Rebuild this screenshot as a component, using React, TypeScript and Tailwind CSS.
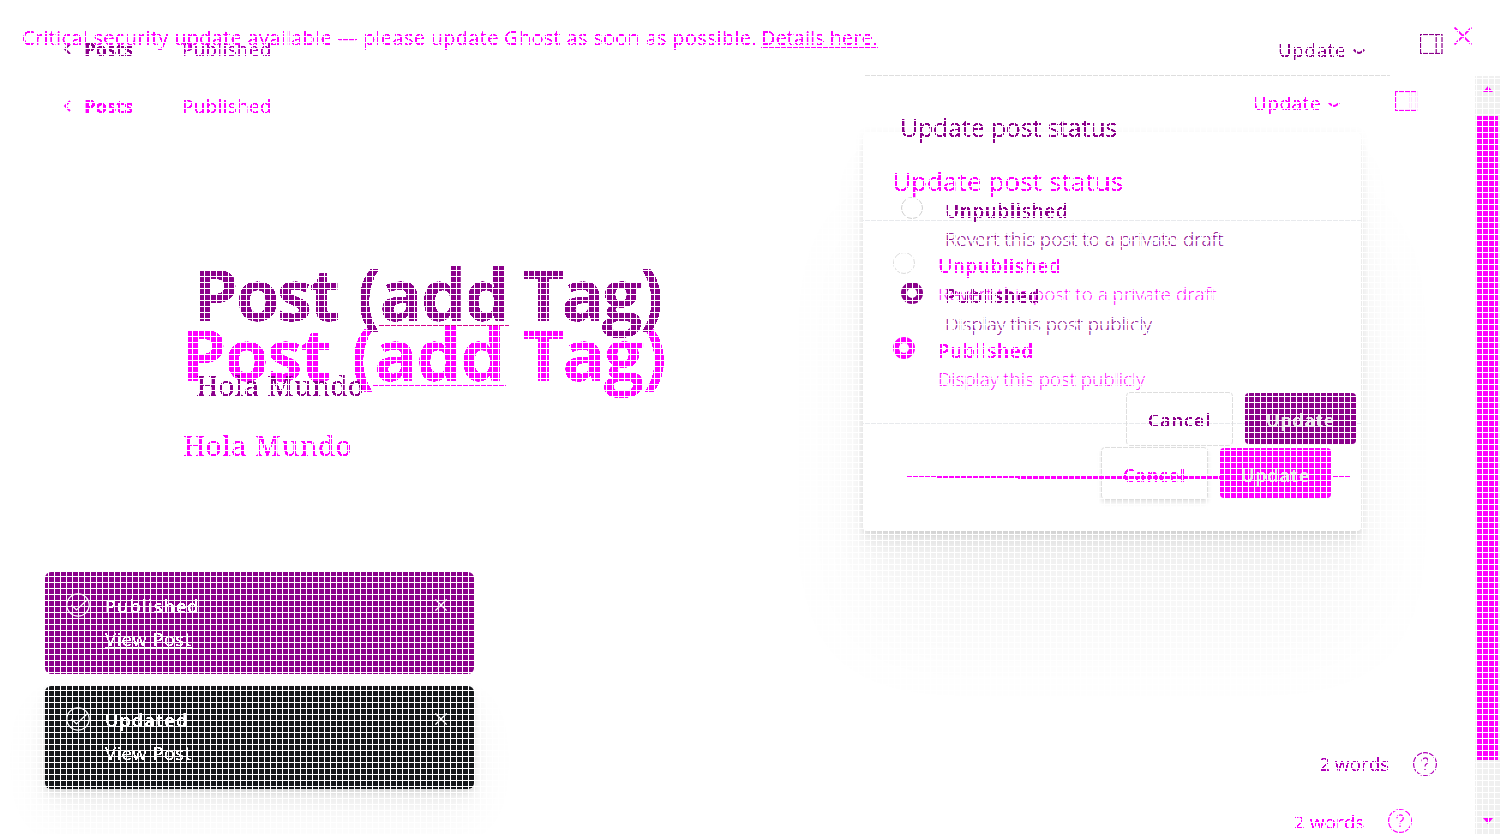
import React from "react";

type Box = { className?: string; children?: React.ReactNode };

/* Full-size sheet; sheets share one grid cell, so later ones lie over earlier ones. */
function Sheet({ className = "", children }: Box) {
  return (
    <div className={`col-start-1 row-start-1 flex h-[834px] w-[1500px] overflow-hidden ${className}`}>
      {children}
    </div>
  );
}

/* Text with hard glyph edges */
function T({ className = "", children }: Box) {
  return (
    <span className={`block h-5 shrink-0 whitespace-nowrap leading-5 [filter:url(#crisp)] ${className}`}>{children}</span>
  );
}

function Cross({ className = "" }: Box) {
  return (
    <svg className={className} viewBox="0 0 18 18" fill="none" stroke="currentColor" strokeWidth="1.9">
      <path d="M0.5 0.5 17.5 17.5M17.5 0.5 0.5 17.5" />
    </svg>
  );
}

function ChevronLeft() {
  return (
    <svg className="h-3 w-2 shrink-0" viewBox="0 0 8 12" fill="none" stroke="currentColor" strokeWidth="1.8">
      <path d="M7 1 2 6 7 11" />
    </svg>
  );
}

function ChevronDown() {
  return (
    <svg className="h-2 w-3 shrink-0" viewBox="0 0 12 8" fill="none" stroke="currentColor" strokeWidth="2">
      <path d="M0.8 1.5Q4 5 6 5T11.2 1.5" />
    </svg>
  );
}

function PanelIcon({ frame, divider }: { frame: number; divider: number }) {
  return (
    <svg className="h-5 w-[23px] shrink-0" viewBox="0 0 23 20" fill="none" stroke="currentColor" strokeWidth="1.2">
      <rect x="0.5" y="0.5" width={frame} height="19" />
      <path d={`M${divider} 0.5V19.5`} />
    </svg>
  );
}

function Help() {
  return (
    <svg className="h-6 w-6 shrink-0" viewBox="0 0 24 24" fill="none" stroke="currentColor" strokeWidth="1.2">
      <circle cx="12" cy="12" r="11.4" />
      <path d="M9 9.2A3.1 3.1 0 1 1 13.6 11.8C12.5 12.4 12 13 12 14.5" />
      <path d="M12 16.5V18" strokeWidth="1.4" />
    </svg>
  );
}

function Check() {
  return (
    <svg className="h-6 w-6 shrink-0" viewBox="0 0 24 24" fill="none" stroke="currentColor" strokeWidth="1.2">
      <circle cx="12" cy="12" r="11.2" />
      <path d="M5.5 12 10.5 17 21.5 6.5" />
    </svg>
  );
}

function Toast({ title, titleClass, underlined, className }: { title: string; titleClass: string; underlined?: boolean; className: string }) {
  return (
    <div className={`flex w-[429px] rounded-md pl-[21px] pr-[27px] text-[18px] text-white ${className}`}>
      <div className="pt-[21px]">
        <Check />
      </div>
      <div className="ml-[15px] pt-[24px]">
        <T className={`font-semibold ${titleClass}`}>{title}</T>
        <T className="mt-[13px] text-[18.5px] tracking-[0.4px]">
          <span className={underlined ? "underline underline-offset-1" : ""}>View Post</span>
        </T>
      </div>
      <Cross className="ml-auto mt-[27px] h-3 w-3" />
    </div>
  );
}

function Radio({ on, className = "" }: { on?: boolean; className?: string }) {
  return (
    <span
      className={`box-border block h-[22px] w-[22px] shrink-0 rounded-full ${on ? "border-[6px]" : "border"} ${className}`}
    />
  );
}

function Option({ label, labelClass, note, noteClass, on, ring, gap }: { label: string; labelClass: string; note: string; noteClass: string; on?: boolean; ring: string; gap: string }) {
  return (
    <div className={`flex h-[57px] text-[19px] ${gap}`}>
      <Radio on={on} className={ring} />
      <div className="pt-1">
        <T className={`font-semibold ${labelClass}`}>{label}</T>
        <span className={`mt-2 block h-5 whitespace-nowrap font-light leading-5 ${noteClass}`}>{note}</span>
      </div>
    </div>
  );
}

function PostTitle({ words, rule }: { words: [string, string, string]; rule: string }) {
  return (
    <div className="flex h-[70px] whitespace-nowrap text-[71px] font-bold leading-[70px] [filter:url(#crisp)]">
      <span className={`shrink-0 ${words[0]}`}>Post</span>
      <span className={`flex shrink-0 ${words[1]}`}>
        (<span className="relative">
          add
          <span className={`absolute -left-px right-[-1px] top-[66px] h-px ${rule}`} />
        </span>
      </span>
      <span className={`shrink-0 ${words[2]}`}>Tag)</span>
    </div>
  );
}

function PublishedState() {
  return (
    <>
      <Sheet className="items-start pt-24 text-[18px]">
        <div className="flex w-[1475px] items-center pl-[63px]">
          <ChevronLeft />
          <T className="ml-[13px] w-[98px] text-[18.5px] font-bold">Posts</T>
          <T className="text-[19px] tracking-[0.3px]">Published</T>
          <div className="ml-auto flex items-start pr-[57px]">
            <T className="w-[75px] -translate-y-[3px] text-[19px] tracking-[0.5px]">Update</T>
            <span className="mt-[5px]"><ChevronDown /></span>
            <span className="-mt-[5px] ml-[55px] flex"><PanelIcon frame={21} divider={15.5} /></span>
          </div>
        </div>
      </Sheet>

      <Sheet className="flex-col pl-[182px] pt-[319px]">
        <PostTitle words={["w-[169px] tracking-[-1.8px]", "w-[172px] tracking-[-0.8px]", "tracking-[-1.5px]"]} rule="bg-[#f0f]" />
        <div className="mt-[40px] h-8 pl-px font-['Noto_Serif','DejaVu_Serif',serif] text-[28px] leading-8 tracking-[0.35px] [filter:url(#crisp)]">
          Hola Mundo
        </div>
      </Sheet>

      <Sheet className="pl-[863px] pt-[133px]">
        <div className="flex h-[398px] w-[498px] flex-col rounded bg-white shadow-[0_0_12px_rgba(0,0,0,0.04),0_3px_3px_rgba(0,0,0,0.03),0_8px_8px_rgba(0,0,0,0.03),0_15px_16px_rgba(0,0,0,0.03),0_30px_40px_rgba(0,0,0,0.035),0_100px_100px_rgba(0,0,0,0.045)]">
          <div className="h-[88px] border-b border-[#e8eaed] pl-[29px] pt-[38px]">
            <T className="text-[26px] tracking-[0.1px]">Update post status</T>
          </div>
          <div className="h-[203px] border-b border-[#e8eaed] pl-[30px] pt-[31px]">
            <Option label="Unpublished" labelClass="tracking-[0.6px]" note="Revert this post to a private draft" noteClass="tracking-[-0.03px]" ring="border-[#dcdcdc]" gap="gap-[23px]" />
            <div className="h-[28px]" />
            <Option on label="Published" labelClass="tracking-[0.6px]" note="Display this post publicly" noteClass="tracking-[-0.07px]" ring="border-[#f0f]" gap="gap-[23px]" />
          </div>
          <div className="flex pl-[238px] pt-[23px] text-[18px] font-semibold">
            <div className="flex h-[53px] w-[107px] items-center justify-center rounded border border-[#dedede] shadow-[0_3px_4px_rgba(0,0,0,0.1)]">
              <T className="mt-[3px] tracking-[0.9px]">Cancel</T>
            </div>
            <div className="ml-3 mt-px flex h-[50px] w-[111px] items-center justify-center rounded bg-[#f0f] text-[#e6e6e6]">
              <T className="mt-[3px] tracking-[0.88px]">Update</T>
            </div>
          </div>
        </div>
      </Sheet>

      {/* Pointer stroke that thickens toward the Cancel button */}
      <Sheet className="items-start pl-[906px] pt-[476px]">
        <svg className="h-[3px] w-[445px]" viewBox="0 0 445 3" fill="#f0f">
          <path d="M0 0H314V3H112V2H31V1H0ZM427 0H445V1H427Z" />
        </svg>
      </Sheet>

      <Sheet className="items-start pl-[1294px] pt-[809px]">
        <T className="mt-[3px] w-[94px] text-[19px]">2 words</T>
        <Help />
      </Sheet>
    </>
  );
}

function EarlierState() {
  return (
    <>
      <Sheet className="items-start pt-[39px] text-[18px]">
        <div className="flex w-[1500px] items-center pl-[63px]">
          <ChevronLeft />
          <T className="ml-[13px] w-[98px] text-[18.5px] font-bold">Posts</T>
          <T className="text-[18.5px] tracking-[0.5px] text-[#b000b8]">Published</T>
          <div className="ml-auto flex items-start pr-[57px]">
            <T className="w-[75px] translate-y-px text-[18.5px] tracking-[0.85px]">Update</T>
            <span className="mt-[9px]"><ChevronDown /></span>
            <span className="-mt-[5px] ml-[55px] flex"><PanelIcon frame={21.5} divider={16.2} /></span>
          </div>
        </div>
      </Sheet>

      <Sheet className="flex-col pl-[194px] pt-[259px]">
        <PostTitle words={["w-[163px] tracking-[-2.9px]", "w-[166px] tracking-[-1.5px]", "tracking-[-2.5px]"]} rule="bg-[#d6008f]" />
        <div className="mt-[40px] h-8 pl-0.5 font-['Noto_Serif','DejaVu_Serif',serif] text-[28px] leading-8 tracking-[0.25px] [filter:url(#crisp)]">
          Hola Mundo
        </div>
      </Sheet>

      <Sheet className="flex-col pl-[865px] pt-[75px]">
        <div className="w-[525px] border-t border-[#dedede] pl-[35px] pt-[41px]">
          <T className="text-[25px] tracking-[-0.2px]">Update post status</T>
          <div className="mt-[60px] pl-px">
            <Option label="Unpublished" labelClass="tracking-[0.6px]" note="Revert this post to a private draft" noteClass="tracking-[-0.03px]" ring="border-[#d0d0d0]" gap="gap-[22px]" />
            <div className="h-[28px]" />
            <Option on label="Published" labelClass="tracking-[0.6px]" note="Display this post publicly" noteClass="tracking-[-0.07px]" ring="border-[#8b008b]" gap="gap-[22px]" />
          </div>
        </div>
        <div className="-mt-[5px] flex pl-[261px] pt-[60px] text-[18px] font-semibold">
          <div className="-mt-[2px] flex h-[54px] w-[107px] items-center justify-center rounded border border-[#dedede]">
            <T className="mt-[2px] tracking-[0.9px]">Cancel</T>
          </div>
          <div className="-mt-[1px] ml-3 flex h-[51px] w-[111px] items-center justify-center rounded bg-[#8b008b] text-[#e6dfe6]">
            <T className="mt-[3px] tracking-[0.88px]">Update</T>
          </div>
        </div>
      </Sheet>

      <Sheet className="items-start pl-[1319px] pt-[752px] text-[#b000b8]">
        <T className="mt-[2px] w-[94px] text-[19px]">2 words</T>
        <Help />
      </Sheet>
    </>
  );
}

export default function App() {
  return (
    <div className="relative grid h-[834px] w-[1500px] overflow-hidden bg-white font-['Open_Sans','Noto_Sans',sans-serif] text-[#f0f]">
      <svg className="absolute h-0 w-0">
        <filter id="crisp" x="-10%" y="-40%" width="120%" height="180%">
          <feComponentTransfer>
            <feFuncA type="linear" slope="5" intercept="-1.4" />
          </feComponentTransfer>
        </filter>
      </svg>

      <PublishedState />

      <div className="col-start-1 row-start-1 grid text-[#8b008b]">
        <EarlierState />
      </div>

      <Sheet className="flex-col pl-[45px] pt-[572px]">
        <Toast title="Published" titleClass="tracking-[1px]" underlined className="h-[102px] bg-[#8b008b]" />
        <Toast
          title="Updated"
          titleClass="tracking-[1.2px]"
          className="mt-3 h-[103px] bg-[#15171a] shadow-[0_3px_6px_rgba(0,0,0,0.08),0_8px_16px_rgba(0,0,0,0.06),0_24px_48px_rgba(0,0,0,0.06)]"
        />
      </Sheet>

      <Sheet className="items-start pl-[22px] pt-[27px] text-[20px]">
        <T className="mt-px w-[739px] tracking-[0.28px]">
          Critical security update available — please update Ghost as soon as possible.
        </T>
        <T className="mt-px underline decoration-1 underline-offset-2">Details here.</T>
        <Cross className="ml-auto mr-[28px] h-[18px] w-[18px]" />
      </Sheet>

      <Sheet className="flex-col items-end pt-[76px]">
        <div className="flex h-[758px] w-[25px] flex-col items-center bg-[#f0f0f0]">
          <svg className="mt-[10px] h-[6px] w-[10px]" viewBox="0 0 10 6" fill="currentColor">
            <path d="M5 0 10 6H0Z" />
          </svg>
          <div className="mt-6 h-[644px] w-[21px] bg-[#f0f]" />
          <svg className="mt-[58px] h-[6px] w-[10px]" viewBox="0 0 10 6" fill="currentColor">
            <path d="M0 0H10L5 6Z" />
          </svg>
        </div>
      </Sheet>

      {/* White raster over the whole page, one line every six pixels */}
      <div className="pointer-events-none absolute inset-0 bg-[linear-gradient(to_right,#fff_1px,transparent_1px),linear-gradient(to_bottom,#fff_1px,transparent_1px)] bg-[size:6px_6px]" />
    </div>
  );
}
